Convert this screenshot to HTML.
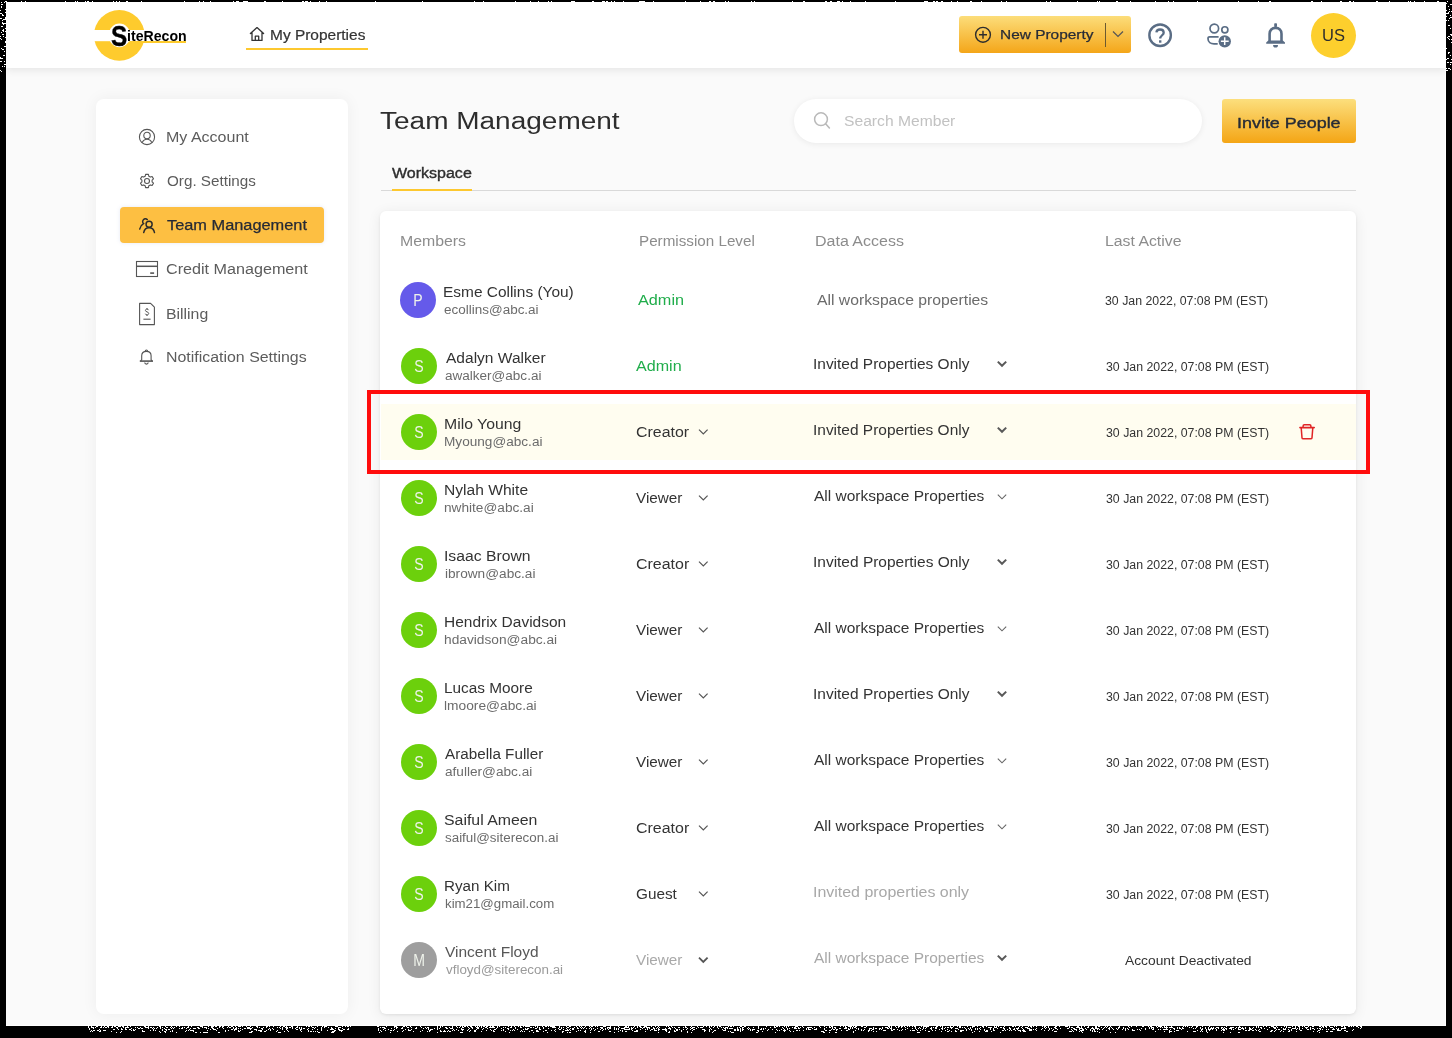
<!DOCTYPE html>
<html><head><meta charset="utf-8"><title>Team Management</title>
<style>
html,body{margin:0;padding:0;}
body{width:1452px;height:1038px;background:#000;position:relative;overflow:hidden;font-family:"Liberation Sans", sans-serif;}
.t{position:absolute;white-space:nowrap;transform-origin:0 0;}
.abs{position:absolute;}
svg{position:absolute;overflow:visible;}
</style></head><body><div style="position:absolute;left:0;top:0;width:1452px;height:1038px;will-change:transform;">
<div class="abs" style="left:6px;top:2px;width:1440px;height:1024px;background:#fff;"></div>
<div class="abs" style="left:6px;top:2px;width:1439px;height:1023px;background:#fafafa;"></div>
<div class="abs" style="left:6px;top:2px;width:1440px;height:66px;background:#fff;box-shadow:0 2px 8px rgba(0,0,0,0.09);"></div>
<svg style="left:0;top:0" width="200" height="70" viewBox="0 0 200 70">
<circle cx="119.3" cy="35.4" r="25.4" fill="#fecb2d"/>
<rect x="90" y="30" width="60" height="11.2" fill="#fff"/>
<ellipse cx="119.5" cy="35.4" rx="10.8" ry="11.9" fill="#fff"/>
<rect x="130" y="41" width="56" height="2" fill="#fecb2d"/>
</svg>
<div class="t" style="left:110.6px;top:21px;font-size:29px;line-height:30px;font-weight:700;color:#000;transform:scaleX(0.84);-webkit-text-stroke:0.4px #000;">S</div>
<svg style="left:249px;top:26px" width="16" height="16" viewBox="0 0 16 16">
<path d="M1.4 7.6 L8 1.6 L14.6 7.6 M3 6.3 V14.4 H13 V6.3 M6.3 14.4 V10.2 H9.7 V14.4" fill="none" stroke="#333" stroke-width="1.3" stroke-linejoin="round" stroke-linecap="round"/>
</svg>
<div class="abs" style="left:246px;top:48px;width:122px;height:2px;background:#fdc82f;"></div>
<div class="abs" style="left:959px;top:16px;width:172px;height:37px;border-radius:3px;background:linear-gradient(#fcdd7a,#f4a619);"></div>
<svg style="left:974px;top:26px" width="18" height="18" viewBox="0 0 18 18">
<circle cx="9" cy="8.8" r="7.4" fill="none" stroke="#2d2d2d" stroke-width="1.4"/>
<path d="M9 4.8 V12.8 M5 8.8 H13" stroke="#2d2d2d" stroke-width="1.4"/>
</svg>
<div class="abs" style="left:1105px;top:23px;width:1px;height:24px;background:#6b5a30;"></div>
<svg style="left:1112px;top:30px" width="12" height="9" viewBox="0 0 12 9">
<path d="M1 1.5 L6 6.5 L11 1.5" fill="none" stroke="#555" stroke-width="1.2"/>
</svg>
<svg style="left:1144px;top:19px" width="32" height="32" viewBox="0 0 32 32">
<circle cx="16.1" cy="16.25" r="10.75" fill="none" stroke="#5a6d85" stroke-width="2.4"/>
<path d="M12.4 13.3 C12.6 11.2 14.1 10.5 16 10.5 C18 10.5 19.7 11.7 19.7 13.7 C19.7 16.1 16.2 16.5 16.2 19.6" fill="none" stroke="#5a6d85" stroke-width="2.3"/>
<rect x="15" y="21.3" width="2.4" height="2.4" fill="#5a6d85"/>
</svg>
<svg style="left:1202px;top:18px" width="34" height="34" viewBox="0 0 34 34">
<circle cx="12.3" cy="10.5" r="4.3" fill="none" stroke="#5a6d85" stroke-width="1.7"/>
<circle cx="22.85" cy="11.8" r="3.05" fill="none" stroke="#5a6d85" stroke-width="1.7"/>
<path d="M16.6 18.85 H7.6 C6.3 18.85 6 19.5 6 20.8 C6 24.2 8.8 25.9 12 25.9 H15.7" fill="none" stroke="#5a6d85" stroke-width="1.7"/>
<circle cx="22.75" cy="23.35" r="6.2" fill="#5a6d85"/>
<path d="M22.7 19.3 V27 M18.9 23.3 H26.7" stroke="#fff" stroke-width="1.5"/>
</svg>
<svg style="left:1260px;top:18px" width="32" height="32" viewBox="0 0 32 32">
<rect x="14.2" y="5.3" width="2.8" height="3.8" rx="0.8" fill="#5a6d85"/>
<path d="M9.6 23.2 V15.8 C9.6 12.1 12 9.9 15.55 9.9 C19.1 9.9 21.5 12.1 21.5 15.8 V23.2" fill="none" stroke="#5a6d85" stroke-width="2.6"/>
<path d="M8.3 22.4 H22.8 L25 24.5 V25.7 H6.2 V24.5 Z" fill="#5a6d85"/>
<path d="M13.1 27 H18 A2.45 2.6 0 0 1 13.1 27 Z" fill="#5a6d85"/>
</svg>
<div class="abs" style="left:1311px;top:12.5px;width:45px;height:45px;border-radius:50%;background:#fdcf2d;"></div>
<div class="abs" style="left:96px;top:99px;width:252px;height:915px;border-radius:8px;background:#fff;box-shadow:0 0 16px rgba(0,0,0,0.055);"></div>
<div class="abs" style="left:120px;top:207px;width:204px;height:36px;border-radius:4px;background:#fdbf42;box-shadow:0 0 4px rgba(120,140,200,0.18);"></div>
<svg style="left:138px;top:128px" width="18" height="18" viewBox="0 0 18 18">
<circle cx="9" cy="9" r="7.6" fill="none" stroke="#555" stroke-width="1.1"/>
<circle cx="9" cy="7.5" r="3.2" fill="none" stroke="#555" stroke-width="1.1"/>
<path d="M4.2 14.6 C5.2 12.2 7 11.2 9 11.2 C11 11.2 12.8 12.2 13.8 14.6" fill="none" stroke="#555" stroke-width="1.1"/>
</svg>
<svg style="left:139px;top:173px" width="16" height="16" viewBox="0 0 16 16">
<path d="M6.6 1.4 H9.4 L9.8 3.2 L11.4 4.1 L13.1 3.5 L14.5 5.9 L13.1 7.1 V8.9 L14.5 10.1 L13.1 12.5 L11.4 11.9 L9.8 12.8 L9.4 14.6 H6.6 L6.2 12.8 L4.6 11.9 L2.9 12.5 L1.5 10.1 L2.9 8.9 V7.1 L1.5 5.9 L2.9 3.5 L4.6 4.1 L6.2 3.2 Z" fill="none" stroke="#555" stroke-width="1.1" stroke-linejoin="round"/>
<circle cx="8" cy="8" r="2.5" fill="none" stroke="#555" stroke-width="1.1"/>
</svg>
<svg style="left:138px;top:216px" width="18" height="18" viewBox="0 0 18 18">
<path d="M9.3 3.6 A2.75 2.75 0 1 0 5.5 7.6 C3.6 8.6 2.2 10.6 1.7 13.1" fill="none" stroke="#2b2b2b" stroke-width="1.45" stroke-linecap="round"/>
<circle cx="11.1" cy="8.2" r="3.05" fill="none" stroke="#2b2b2b" stroke-width="1.45"/>
<path d="M5.7 16.6 C6.3 13.4 8.4 11.7 11.1 11.7 C13.8 11.7 15.9 13.4 16.5 16.6" fill="none" stroke="#2b2b2b" stroke-width="1.45" stroke-linecap="round"/>
</svg>
<svg style="left:135px;top:260px" width="24" height="18" viewBox="0 0 24 18">
<rect x="1.5" y="1.5" width="21" height="15" fill="none" stroke="#555" stroke-width="1.1"/>
<path d="M1.5 6.3 H22.5" stroke="#555" stroke-width="1.5"/>
<path d="M15.2 13.1 H19.1" stroke="#555" stroke-width="1.6"/>
</svg>
<svg style="left:138px;top:302px" width="18" height="24" viewBox="0 0 18 24">
<path d="M1.6 1.4 H12.6 L16.4 5.2 V22.6 H1.6 Z" fill="none" stroke="#555" stroke-width="1.1" stroke-linejoin="round"/>
<path d="M10.6 8.2 C10.4 7.4 9.8 7.1 9 7.1 C8.1 7.1 7.4 7.6 7.4 8.4 C7.4 10.2 10.7 9.5 10.7 11.5 C10.7 12.3 10 12.9 9 12.9 C8.1 12.9 7.5 12.5 7.3 11.7 M9 6 V7.1 M9 12.9 V14" fill="none" stroke="#555" stroke-width="1"/>
<path d="M5.4 17.2 H12.6" stroke="#555" stroke-width="1.1"/>
</svg>
<svg style="left:139px;top:347px" width="16" height="20" viewBox="0 0 16 20">
<path d="M6.2 4.4 C6.2 2.5 8.6 2.5 8.6 4.4" fill="none" stroke="#555" stroke-width="1.1"/>
<path d="M2.7 12.9 V8.8 C2.7 6 4.5 4.4 7.4 4.4 C10.3 4.4 12.1 6 12.1 8.8 V12.9 L13.2 13.8 M2.7 12.9 L1.6 13.8" fill="none" stroke="#555" stroke-width="1.1"/>
<path d="M1.6 14.1 H13.2" stroke="#555" stroke-width="1.6" stroke-linecap="square"/>
<path d="M5.7 15.5 C5.8 17.6 9.1 17.6 9.2 15.5" fill="none" stroke="#555" stroke-width="1.1"/>
</svg>
<div class="abs" style="left:794px;top:99px;width:408px;height:44px;border-radius:22px;background:#fff;box-shadow:0 1px 6px rgba(0,0,0,0.07);"></div>
<svg style="left:810px;top:110px" width="24" height="24" viewBox="0 0 24 24">
<circle cx="11" cy="9.2" r="6.4" fill="none" stroke="#b9b9b9" stroke-width="1.5"/>
<path d="M15.6 13.8 L19.4 18" stroke="#b9b9b9" stroke-width="1.6" stroke-linecap="round"/>
</svg>
<div class="abs" style="left:1222px;top:99px;width:134px;height:44px;border-radius:3px;background:linear-gradient(#fcdf7d,#f4a515);"></div>
<div class="abs" style="left:381px;top:190px;width:975px;height:1px;background:#d9d9d9;"></div>
<div class="abs" style="left:392px;top:189px;width:80px;height:2px;background:#fdc82f;"></div>
<div class="abs" style="left:380px;top:211px;width:976px;height:803px;border-radius:6px;background:#fff;box-shadow:0 1px 3px rgba(0,0,0,0.07),0 2px 14px rgba(0,0,0,0.075);"></div>
<div class="abs" style="left:400px;top:282px;width:36px;height:36px;border-radius:50%;background:#655aea;"></div>
<div class="t" style="left:400px;top:283.0px;width:36px;height:36px;line-height:36px;text-align:center;font-size:16px;color:#eef2ea;transform:scaleX(0.88);transform-origin:18px 0;">P</div>
<div class="abs" style="left:401px;top:348px;width:36px;height:36px;border-radius:50%;background:#6cd00c;"></div>
<div class="t" style="left:401px;top:349.0px;width:36px;height:36px;line-height:36px;text-align:center;font-size:16px;color:#eef2ea;transform:scaleX(0.88);transform-origin:18px 0;">S</div>
<svg style="left:995px;top:359.3px" width="14" height="10" viewBox="0 0 14 10">
<path d="M2.8 2.6 L7 6.8 L11.2 2.6" fill="none" stroke="#595959" stroke-width="2"/>
</svg>
<div class="abs" style="left:381px;top:404px;width:975px;height:56px;background:#fffdf0;"></div>
<div class="abs" style="left:401px;top:414px;width:36px;height:36px;border-radius:50%;background:#6cd00c;"></div>
<div class="t" style="left:401px;top:415.0px;width:36px;height:36px;line-height:36px;text-align:center;font-size:16px;color:#eef2ea;transform:scaleX(0.88);transform-origin:18px 0;">S</div>
<svg style="left:697px;top:428px" width="12" height="8" viewBox="0 0 12 8">
<path d="M2 1.6 L6.3 5.9 L10.6 1.6" fill="none" stroke="#555" stroke-width="1.2"/>
</svg>
<svg style="left:995px;top:425.3px" width="14" height="10" viewBox="0 0 14 10">
<path d="M2.8 2.6 L7 6.8 L11.2 2.6" fill="none" stroke="#595959" stroke-width="2"/>
</svg>
<svg style="left:1297px;top:422px" width="20" height="20" viewBox="0 0 20 20">
<path d="M2.9 5.6 H17.2" stroke="#e02525" stroke-width="1.6" stroke-linecap="round"/>
<path d="M6.1 5.6 V3.9 C6.1 3 6.5 2.8 7.3 2.8 H12.7 C13.5 2.8 13.9 3 13.9 3.9 V5.6" fill="none" stroke="#e02525" stroke-width="1.5"/>
<path d="M4.2 5.8 L5 15.8 C5.1 16.6 5.5 16.85 6.3 16.85 H13.7 C14.5 16.85 14.9 16.6 15 15.8 L15.8 5.8" fill="none" stroke="#e02525" stroke-width="1.5"/>
</svg>
<div class="abs" style="left:401px;top:480px;width:36px;height:36px;border-radius:50%;background:#6cd00c;"></div>
<div class="t" style="left:401px;top:481.0px;width:36px;height:36px;line-height:36px;text-align:center;font-size:16px;color:#eef2ea;transform:scaleX(0.88);transform-origin:18px 0;">S</div>
<svg style="left:697px;top:494px" width="12" height="8" viewBox="0 0 12 8">
<path d="M2 1.6 L6.3 5.9 L10.6 1.6" fill="none" stroke="#555" stroke-width="1.2"/>
</svg>
<svg style="left:995px;top:492.3px" width="14" height="10" viewBox="0 0 14 10">
<path d="M2.8 2.6 L7 6.8 L11.2 2.6" fill="none" stroke="#666" stroke-width="1.1"/>
</svg>
<div class="abs" style="left:401px;top:546px;width:36px;height:36px;border-radius:50%;background:#6cd00c;"></div>
<div class="t" style="left:401px;top:547.0px;width:36px;height:36px;line-height:36px;text-align:center;font-size:16px;color:#eef2ea;transform:scaleX(0.88);transform-origin:18px 0;">S</div>
<svg style="left:697px;top:560px" width="12" height="8" viewBox="0 0 12 8">
<path d="M2 1.6 L6.3 5.9 L10.6 1.6" fill="none" stroke="#555" stroke-width="1.2"/>
</svg>
<svg style="left:995px;top:557.3px" width="14" height="10" viewBox="0 0 14 10">
<path d="M2.8 2.6 L7 6.8 L11.2 2.6" fill="none" stroke="#595959" stroke-width="2"/>
</svg>
<div class="abs" style="left:401px;top:612px;width:36px;height:36px;border-radius:50%;background:#6cd00c;"></div>
<div class="t" style="left:401px;top:613.0px;width:36px;height:36px;line-height:36px;text-align:center;font-size:16px;color:#eef2ea;transform:scaleX(0.88);transform-origin:18px 0;">S</div>
<svg style="left:697px;top:626px" width="12" height="8" viewBox="0 0 12 8">
<path d="M2 1.6 L6.3 5.9 L10.6 1.6" fill="none" stroke="#555" stroke-width="1.2"/>
</svg>
<svg style="left:995px;top:624.3px" width="14" height="10" viewBox="0 0 14 10">
<path d="M2.8 2.6 L7 6.8 L11.2 2.6" fill="none" stroke="#666" stroke-width="1.1"/>
</svg>
<div class="abs" style="left:401px;top:678px;width:36px;height:36px;border-radius:50%;background:#6cd00c;"></div>
<div class="t" style="left:401px;top:679.0px;width:36px;height:36px;line-height:36px;text-align:center;font-size:16px;color:#eef2ea;transform:scaleX(0.88);transform-origin:18px 0;">S</div>
<svg style="left:697px;top:692px" width="12" height="8" viewBox="0 0 12 8">
<path d="M2 1.6 L6.3 5.9 L10.6 1.6" fill="none" stroke="#555" stroke-width="1.2"/>
</svg>
<svg style="left:995px;top:689.3px" width="14" height="10" viewBox="0 0 14 10">
<path d="M2.8 2.6 L7 6.8 L11.2 2.6" fill="none" stroke="#595959" stroke-width="2"/>
</svg>
<div class="abs" style="left:401px;top:744px;width:36px;height:36px;border-radius:50%;background:#6cd00c;"></div>
<div class="t" style="left:401px;top:745.0px;width:36px;height:36px;line-height:36px;text-align:center;font-size:16px;color:#eef2ea;transform:scaleX(0.88);transform-origin:18px 0;">S</div>
<svg style="left:697px;top:758px" width="12" height="8" viewBox="0 0 12 8">
<path d="M2 1.6 L6.3 5.9 L10.6 1.6" fill="none" stroke="#555" stroke-width="1.2"/>
</svg>
<svg style="left:995px;top:756.3px" width="14" height="10" viewBox="0 0 14 10">
<path d="M2.8 2.6 L7 6.8 L11.2 2.6" fill="none" stroke="#666" stroke-width="1.1"/>
</svg>
<div class="abs" style="left:401px;top:810px;width:36px;height:36px;border-radius:50%;background:#6cd00c;"></div>
<div class="t" style="left:401px;top:811.0px;width:36px;height:36px;line-height:36px;text-align:center;font-size:16px;color:#eef2ea;transform:scaleX(0.88);transform-origin:18px 0;">S</div>
<svg style="left:697px;top:824px" width="12" height="8" viewBox="0 0 12 8">
<path d="M2 1.6 L6.3 5.9 L10.6 1.6" fill="none" stroke="#555" stroke-width="1.2"/>
</svg>
<svg style="left:995px;top:822.3px" width="14" height="10" viewBox="0 0 14 10">
<path d="M2.8 2.6 L7 6.8 L11.2 2.6" fill="none" stroke="#666" stroke-width="1.1"/>
</svg>
<div class="abs" style="left:401px;top:876px;width:36px;height:36px;border-radius:50%;background:#6cd00c;"></div>
<div class="t" style="left:401px;top:877.0px;width:36px;height:36px;line-height:36px;text-align:center;font-size:16px;color:#eef2ea;transform:scaleX(0.88);transform-origin:18px 0;">S</div>
<svg style="left:697px;top:890px" width="12" height="8" viewBox="0 0 12 8">
<path d="M2 1.6 L6.3 5.9 L10.6 1.6" fill="none" stroke="#555" stroke-width="1.2"/>
</svg>
<div class="abs" style="left:401px;top:942px;width:36px;height:36px;border-radius:50%;background:#9e9e9e;"></div>
<div class="t" style="left:401px;top:943.0px;width:36px;height:36px;line-height:36px;text-align:center;font-size:16px;color:#eef2ea;transform:scaleX(0.88);transform-origin:18px 0;">M</div>
<svg style="left:697px;top:956px" width="12" height="8" viewBox="0 0 12 8">
<path d="M2 1.6 L6.3 5.9 L10.6 1.6" fill="none" stroke="#555" stroke-width="1.8"/>
</svg>
<svg style="left:995px;top:953.3px" width="14" height="10" viewBox="0 0 14 10">
<path d="M2.8 2.6 L7 6.8 L11.2 2.6" fill="none" stroke="#595959" stroke-width="2"/>
</svg>
<div class="t" style="left:127.48px;top:28.85px;font-size:14px;line-height:14px;color:#000;font-weight:700;transform:scaleX(1.0095);">iteRecon</div>
<div class="t" style="left:269.53px;top:28.05px;font-size:14px;line-height:14px;color:#333;font-weight:400;transform:scaleX(1.1045);-webkit-text-stroke:0.2px #333;">My Properties</div>
<div class="t" style="left:1000.49px;top:27.84px;font-size:13.6px;line-height:13.6px;color:#272b36;font-weight:400;transform:scaleX(1.1343);-webkit-text-stroke:0.25px #272b36;">New Property</div>
<div class="t" style="left:1321.90px;top:27.01px;font-size:17px;line-height:17px;color:#2d2d2d;font-weight:400;transform:scaleX(0.9711);">US</div>
<div class="t" style="left:166.09px;top:130.15px;font-size:14px;line-height:14px;color:#5c5c5c;font-weight:400;transform:scaleX(1.1441);">My Account</div>
<div class="t" style="left:166.60px;top:174.25px;font-size:14px;line-height:14px;color:#5c5c5c;font-weight:400;transform:scaleX(1.0874);">Org. Settings</div>
<div class="t" style="left:167.12px;top:217.95px;font-size:14px;line-height:14px;color:#262a35;font-weight:400;transform:scaleX(1.1676);-webkit-text-stroke:0.25px #262a35;">Team Management</div>
<div class="t" style="left:166.34px;top:262.15px;font-size:14px;line-height:14px;color:#5c5c5c;font-weight:400;transform:scaleX(1.1535);">Credit Management</div>
<div class="t" style="left:166.29px;top:307.25px;font-size:14px;line-height:14px;color:#5c5c5c;font-weight:400;transform:scaleX(1.1294);">Billing</div>
<div class="t" style="left:166.23px;top:350.05px;font-size:14px;line-height:14px;color:#5c5c5c;font-weight:400;transform:scaleX(1.1367);">Notification Settings</div>
<div class="t" style="left:380.42px;top:109.53px;font-size:23px;line-height:23px;color:#2d2d2d;font-weight:400;transform:scaleX(1.2171);">Team Management</div>
<div class="t" style="left:843.82px;top:114.05px;font-size:14px;line-height:14px;color:#c2c2c2;font-weight:400;transform:scaleX(1.1179);">Search Member</div>
<div class="t" style="left:1237.25px;top:115.06px;font-size:15.4px;line-height:15.4px;color:#262b36;font-weight:400;transform:scaleX(1.1641);-webkit-text-stroke:0.4px #262b36;">Invite People</div>
<div class="t" style="left:392.35px;top:166.15px;font-size:14px;line-height:14px;color:#2d2d2d;font-weight:400;transform:scaleX(1.1435);-webkit-text-stroke:0.35px #2d2d2d;">Workspace</div>
<div class="t" style="left:399.52px;top:234.15px;font-size:14px;line-height:14px;color:#8c8c8c;font-weight:400;transform:scaleX(1.1314);">Members</div>
<div class="t" style="left:638.62px;top:234.15px;font-size:14px;line-height:14px;color:#8c8c8c;font-weight:400;transform:scaleX(1.0862);">Permission Level</div>
<div class="t" style="left:814.62px;top:234.15px;font-size:14px;line-height:14px;color:#8c8c8c;font-weight:400;transform:scaleX(1.1427);">Data Access</div>
<div class="t" style="left:1104.84px;top:234.15px;font-size:14px;line-height:14px;color:#8c8c8c;font-weight:400;transform:scaleX(1.1287);">Last Active</div>
<div class="t" style="left:443.43px;top:285.35px;font-size:14px;line-height:14px;color:#333;font-weight:400;transform:scaleX(1.1029);">Esme Collins (You)</div>
<div class="t" style="left:444.33px;top:303.84px;font-size:12px;line-height:12px;color:#6b6b6b;font-weight:400;transform:scaleX(1.1233);">ecollins@abc.ai</div>
<div class="t" style="left:637.64px;top:293.15px;font-size:14px;line-height:14px;color:#20ad4b;font-weight:400;transform:scaleX(1.1606);">Admin</div>
<div class="t" style="left:816.72px;top:293.25px;font-size:14px;line-height:14px;color:#6b6b6b;font-weight:400;transform:scaleX(1.1227);">All workspace properties</div>
<div class="t" style="left:1104.57px;top:294.52px;font-size:12.5px;line-height:12.5px;color:#333;font-weight:400;transform:scaleX(0.9864);">30 Jan 2022, 07:08 PM (EST)</div>
<div class="t" style="left:445.51px;top:351.35px;font-size:14px;line-height:14px;color:#333;font-weight:400;transform:scaleX(1.1094);">Adalyn Walker</div>
<div class="t" style="left:444.81px;top:369.64px;font-size:12px;line-height:12px;color:#6b6b6b;font-weight:400;transform:scaleX(1.1269);">awalker@abc.ai</div>
<div class="t" style="left:636.40px;top:359.15px;font-size:14px;line-height:14px;color:#20ad4b;font-weight:400;transform:scaleX(1.1495);">Admin</div>
<div class="t" style="left:812.68px;top:357.45px;font-size:14px;line-height:14px;color:#333;font-weight:400;transform:scaleX(1.1043);">Invited Properties Only</div>
<div class="t" style="left:1105.57px;top:360.52px;font-size:12.5px;line-height:12.5px;color:#333;font-weight:400;transform:scaleX(0.9864);">30 Jan 2022, 07:08 PM (EST)</div>
<div class="t" style="left:443.80px;top:417.35px;font-size:14px;line-height:14px;color:#333;font-weight:400;transform:scaleX(1.1282);">Milo Young</div>
<div class="t" style="left:444.40px;top:435.64px;font-size:12px;line-height:12px;color:#6b6b6b;font-weight:400;transform:scaleX(1.1334);">Myoung@abc.ai</div>
<div class="t" style="left:635.84px;top:425.15px;font-size:14px;line-height:14px;color:#333;font-weight:400;transform:scaleX(1.1371);">Creator</div>
<div class="t" style="left:812.68px;top:423.45px;font-size:14px;line-height:14px;color:#333;font-weight:400;transform:scaleX(1.1043);">Invited Properties Only</div>
<div class="t" style="left:1105.57px;top:426.52px;font-size:12.5px;line-height:12.5px;color:#333;font-weight:400;transform:scaleX(0.9864);">30 Jan 2022, 07:08 PM (EST)</div>
<div class="t" style="left:444.01px;top:483.35px;font-size:14px;line-height:14px;color:#333;font-weight:400;transform:scaleX(1.1137);">Nylah White</div>
<div class="t" style="left:444.35px;top:501.64px;font-size:12px;line-height:12px;color:#6b6b6b;font-weight:400;transform:scaleX(1.1374);">nwhite@abc.ai</div>
<div class="t" style="left:636.37px;top:491.15px;font-size:14px;line-height:14px;color:#333;font-weight:400;transform:scaleX(1.0922);">Viewer</div>
<div class="t" style="left:814.26px;top:489.45px;font-size:14px;line-height:14px;color:#333;font-weight:400;transform:scaleX(1.1052);">All workspace Properties</div>
<div class="t" style="left:1105.57px;top:492.52px;font-size:12.5px;line-height:12.5px;color:#333;font-weight:400;transform:scaleX(0.9864);">30 Jan 2022, 07:08 PM (EST)</div>
<div class="t" style="left:443.61px;top:549.35px;font-size:14px;line-height:14px;color:#333;font-weight:400;transform:scaleX(1.1244);">Isaac Brown</div>
<div class="t" style="left:444.65px;top:567.64px;font-size:12px;line-height:12px;color:#6b6b6b;font-weight:400;transform:scaleX(1.1371);">ibrown@abc.ai</div>
<div class="t" style="left:635.77px;top:557.15px;font-size:14px;line-height:14px;color:#333;font-weight:400;transform:scaleX(1.1403);">Creator</div>
<div class="t" style="left:812.68px;top:555.45px;font-size:14px;line-height:14px;color:#333;font-weight:400;transform:scaleX(1.1051);">Invited Properties Only</div>
<div class="t" style="left:1105.57px;top:558.52px;font-size:12.5px;line-height:12.5px;color:#333;font-weight:400;transform:scaleX(0.9864);">30 Jan 2022, 07:08 PM (EST)</div>
<div class="t" style="left:444.14px;top:615.35px;font-size:14px;line-height:14px;color:#333;font-weight:400;transform:scaleX(1.1053);">Hendrix Davidson</div>
<div class="t" style="left:444.35px;top:633.64px;font-size:12px;line-height:12px;color:#6b6b6b;font-weight:400;transform:scaleX(1.1436);">hdavidson@abc.ai</div>
<div class="t" style="left:636.37px;top:623.15px;font-size:14px;line-height:14px;color:#333;font-weight:400;transform:scaleX(1.0922);">Viewer</div>
<div class="t" style="left:814.26px;top:621.45px;font-size:14px;line-height:14px;color:#333;font-weight:400;transform:scaleX(1.1052);">All workspace Properties</div>
<div class="t" style="left:1105.57px;top:624.52px;font-size:12.5px;line-height:12.5px;color:#333;font-weight:400;transform:scaleX(0.9864);">30 Jan 2022, 07:08 PM (EST)</div>
<div class="t" style="left:444.26px;top:681.35px;font-size:14px;line-height:14px;color:#333;font-weight:400;transform:scaleX(1.0957);">Lucas Moore</div>
<div class="t" style="left:444.35px;top:699.64px;font-size:12px;line-height:12px;color:#6b6b6b;font-weight:400;transform:scaleX(1.1457);">lmoore@abc.ai</div>
<div class="t" style="left:636.37px;top:689.15px;font-size:14px;line-height:14px;color:#333;font-weight:400;transform:scaleX(1.0922);">Viewer</div>
<div class="t" style="left:812.68px;top:687.45px;font-size:14px;line-height:14px;color:#333;font-weight:400;transform:scaleX(1.1051);">Invited Properties Only</div>
<div class="t" style="left:1105.57px;top:690.52px;font-size:12.5px;line-height:12.5px;color:#333;font-weight:400;transform:scaleX(0.9864);">30 Jan 2022, 07:08 PM (EST)</div>
<div class="t" style="left:445.48px;top:747.35px;font-size:14px;line-height:14px;color:#333;font-weight:400;transform:scaleX(1.0881);">Arabella Fuller</div>
<div class="t" style="left:444.80px;top:765.64px;font-size:12px;line-height:12px;color:#6b6b6b;font-weight:400;transform:scaleX(1.1347);">afuller@abc.ai</div>
<div class="t" style="left:636.37px;top:755.15px;font-size:14px;line-height:14px;color:#333;font-weight:400;transform:scaleX(1.0922);">Viewer</div>
<div class="t" style="left:814.26px;top:753.45px;font-size:14px;line-height:14px;color:#333;font-weight:400;transform:scaleX(1.1052);">All workspace Properties</div>
<div class="t" style="left:1105.57px;top:756.52px;font-size:12.5px;line-height:12.5px;color:#333;font-weight:400;transform:scaleX(0.9864);">30 Jan 2022, 07:08 PM (EST)</div>
<div class="t" style="left:443.96px;top:813.35px;font-size:14px;line-height:14px;color:#333;font-weight:400;transform:scaleX(1.1326);">Saiful Ameen</div>
<div class="t" style="left:444.56px;top:831.64px;font-size:12px;line-height:12px;color:#6b6b6b;font-weight:400;transform:scaleX(1.1161);">saiful@siterecon.ai</div>
<div class="t" style="left:635.77px;top:821.15px;font-size:14px;line-height:14px;color:#333;font-weight:400;transform:scaleX(1.1403);">Creator</div>
<div class="t" style="left:814.26px;top:819.45px;font-size:14px;line-height:14px;color:#333;font-weight:400;transform:scaleX(1.1052);">All workspace Properties</div>
<div class="t" style="left:1105.57px;top:822.52px;font-size:12.5px;line-height:12.5px;color:#333;font-weight:400;transform:scaleX(0.9864);">30 Jan 2022, 07:08 PM (EST)</div>
<div class="t" style="left:444.38px;top:879.35px;font-size:14px;line-height:14px;color:#333;font-weight:400;transform:scaleX(1.0852);">Ryan Kim</div>
<div class="t" style="left:444.72px;top:897.64px;font-size:12px;line-height:12px;color:#6b6b6b;font-weight:400;transform:scaleX(1.1045);">kim21@gmail.com</div>
<div class="t" style="left:635.78px;top:887.15px;font-size:14px;line-height:14px;color:#333;font-weight:400;transform:scaleX(1.0941);">Guest</div>
<div class="t" style="left:812.67px;top:885.45px;font-size:14px;line-height:14px;color:#a8a8a8;font-weight:400;transform:scaleX(1.1393);">Invited properties only</div>
<div class="t" style="left:1105.57px;top:888.52px;font-size:12.5px;line-height:12.5px;color:#333;font-weight:400;transform:scaleX(0.9864);">30 Jan 2022, 07:08 PM (EST)</div>
<div class="t" style="left:445.09px;top:945.35px;font-size:14px;line-height:14px;color:#575757;font-weight:400;transform:scaleX(1.1064);">Vincent Floyd</div>
<div class="t" style="left:445.54px;top:963.64px;font-size:12px;line-height:12px;color:#9a9a9a;font-weight:400;transform:scaleX(1.1162);">vfloyd@siterecon.ai</div>
<div class="t" style="left:636.37px;top:953.15px;font-size:14px;line-height:14px;color:#a9a9a9;font-weight:400;transform:scaleX(1.0922);">Viewer</div>
<div class="t" style="left:814.26px;top:951.45px;font-size:14px;line-height:14px;color:#a8a8a8;font-weight:400;transform:scaleX(1.1052);">All workspace Properties</div>
<div class="t" style="left:1124.72px;top:954.64px;font-size:12px;line-height:12px;color:#333;font-weight:400;transform:scaleX(1.1496);">Account Deactivated</div>
<div class="abs" style="left:367px;top:390px;width:995px;height:76px;border:4px solid #ff0d0d;"></div>
<svg style="left:88px;top:1026px" width="263" height="7" viewBox="0 0 263 7" shape-rendering="crispEdges"><path fill="#fff" d="M0 0h1v1h-1zM3 0h1v1h-1zM8 0h2v1h-2zM13 0h1v1h-1zM16 0h1v1h-1zM19 0h2v1h-2zM24 0h1v1h-1zM26 0h2v1h-2zM30 0h3v1h-3zM34 0h2v1h-2zM39 0h1v1h-1zM42 0h1v1h-1zM56 0h2v1h-2zM60 0h1v1h-1zM71 0h2v1h-2zM77 0h1v1h-1zM83 0h1v1h-1zM88 0h1v1h-1zM91 0h1v1h-1zM100 0h1v1h-1zM103 0h1v1h-1zM112 0h3v1h-3zM120 0h1v1h-1zM123 0h3v1h-3zM127 0h2v1h-2zM131 0h2v1h-2zM134 0h2v1h-2zM140 0h1v1h-1zM143 0h2v1h-2zM147 0h1v1h-1zM150 0h3v1h-3zM154 0h1v1h-1zM158 0h1v1h-1zM162 0h1v1h-1zM168 0h2v1h-2zM178 0h2v1h-2zM181 0h1v1h-1zM185 0h1v1h-1zM192 0h1v1h-1zM195 0h2v1h-2zM198 0h1v1h-1zM203 0h2v1h-2zM209 0h1v1h-1zM218 0h1v1h-1zM220 0h2v1h-2zM223 0h1v1h-1zM229 0h1v1h-1zM234 0h1v1h-1zM236 0h3v1h-3zM247 0h3v1h-3zM254 0h1v1h-1zM257 0h1v1h-1zM259 0h2v1h-2zM262 0h1v1h-1zM0 1h1v1h-1zM3 1h3v1h-3zM7 1h1v1h-1zM12 1h2v1h-2zM15 1h1v1h-1zM17 1h2v1h-2zM20 1h1v1h-1zM23 1h2v1h-2zM28 1h2v1h-2zM35 1h1v1h-1zM37 1h4v1h-4zM47 1h1v1h-1zM49 1h1v1h-1zM52 1h1v1h-1zM57 1h4v1h-4zM62 1h2v1h-2zM65 1h1v1h-1zM69 1h1v1h-1zM72 1h1v1h-1zM74 1h1v1h-1zM78 1h2v1h-2zM82 1h1v1h-1zM84 1h1v1h-1zM86 1h1v1h-1zM94 1h1v1h-1zM96 1h1v1h-1zM99 1h2v1h-2zM109 1h2v1h-2zM114 1h1v1h-1zM116 1h3v1h-3zM123 1h2v1h-2zM131 1h1v1h-1zM134 1h1v1h-1zM139 1h1v1h-1zM141 1h2v1h-2zM145 1h1v1h-1zM148 1h1v1h-1zM159 1h3v1h-3zM164 1h1v1h-1zM169 1h1v1h-1zM171 1h1v1h-1zM175 1h1v1h-1zM178 1h1v1h-1zM189 1h1v1h-1zM191 1h1v1h-1zM194 1h1v1h-1zM197 1h3v1h-3zM201 1h2v1h-2zM204 1h1v1h-1zM208 1h2v1h-2zM211 1h1v1h-1zM213 1h1v1h-1zM224 1h2v1h-2zM227 1h1v1h-1zM233 1h1v1h-1zM236 1h1v1h-1zM240 1h1v1h-1zM243 1h1v1h-1zM250 1h3v1h-3zM1 2h1v1h-1zM5 2h1v1h-1zM29 2h1v1h-1zM33 2h1v1h-1zM37 2h1v1h-1zM43 2h1v1h-1zM50 2h2v1h-2zM53 2h2v1h-2zM60 2h1v1h-1zM64 2h1v1h-1zM66 2h1v1h-1zM68 2h1v1h-1zM72 2h1v1h-1zM76 2h1v1h-1zM83 2h1v1h-1zM85 2h1v1h-1zM91 2h1v1h-1zM93 2h2v1h-2zM98 2h1v1h-1zM102 2h1v1h-1zM105 2h3v1h-3zM110 2h2v1h-2zM118 2h1v1h-1zM120 2h1v1h-1zM124 2h2v1h-2zM129 2h1v1h-1zM135 2h1v1h-1zM145 2h1v1h-1zM147 2h2v1h-2zM150 2h1v1h-1zM152 2h1v1h-1zM156 2h2v1h-2zM159 2h5v1h-5zM173 2h2v1h-2zM181 2h1v1h-1zM184 2h1v1h-1zM192 2h1v1h-1zM194 2h1v1h-1zM198 2h2v1h-2zM204 2h1v1h-1zM207 2h1v1h-1zM211 2h1v1h-1zM213 2h1v1h-1zM215 2h2v1h-2zM220 2h1v1h-1zM226 2h1v1h-1zM233 2h1v1h-1zM243 2h2v1h-2zM247 2h1v1h-1zM250 2h1v1h-1zM254 2h1v1h-1zM260 2h1v1h-1zM1 3h1v1h-1zM11 3h1v1h-1zM25 3h2v1h-2zM30 3h1v1h-1zM33 3h2v1h-2zM37 3h2v1h-2zM41 3h2v1h-2zM45 3h1v1h-1zM47 3h1v1h-1zM65 3h1v1h-1zM74 3h1v1h-1zM77 3h2v1h-2zM80 3h2v1h-2zM101 3h1v1h-1zM122 3h1v1h-1zM125 3h3v1h-3zM143 3h2v1h-2zM146 3h3v1h-3zM154 3h1v1h-1zM162 3h1v1h-1zM166 3h3v1h-3zM174 3h1v1h-1zM180 3h1v1h-1zM182 3h1v1h-1zM185 3h1v1h-1zM194 3h1v1h-1zM198 3h1v1h-1zM208 3h2v1h-2zM212 3h2v1h-2zM219 3h1v1h-1zM224 3h1v1h-1zM229 3h1v1h-1zM233 3h1v1h-1zM242 3h4v1h-4zM250 3h2v1h-2zM255 3h2v1h-2zM259 3h2v1h-2zM3 4h1v1h-1zM5 4h2v1h-2zM9 4h2v1h-2zM12 4h1v1h-1zM15 4h3v1h-3zM43 4h1v1h-1zM45 4h2v1h-2zM54 4h1v1h-1zM62 4h1v1h-1zM65 4h1v1h-1zM67 4h1v1h-1zM74 4h1v1h-1zM78 4h1v1h-1zM84 4h1v1h-1zM98 4h1v1h-1zM100 4h1v1h-1zM102 4h4v1h-4zM119 4h1v1h-1zM128 4h1v1h-1zM137 4h1v1h-1zM140 4h1v1h-1zM146 4h1v1h-1zM150 4h1v1h-1zM152 4h1v1h-1zM168 4h1v1h-1zM170 4h4v1h-4zM178 4h1v1h-1zM182 4h1v1h-1zM189 4h1v1h-1zM199 4h1v1h-1zM212 4h1v1h-1zM220 4h1v1h-1zM233 4h1v1h-1zM239 4h1v1h-1zM246 4h2v1h-2zM251 4h4v1h-4zM2 5h1v1h-1zM4 5h1v1h-1zM11 5h2v1h-2zM23 5h1v1h-1zM33 5h1v1h-1zM54 5h3v1h-3zM71 5h1v1h-1zM76 5h2v1h-2zM82 5h1v1h-1zM84 5h1v1h-1zM97 5h1v1h-1zM105 5h1v1h-1zM137 5h1v1h-1zM150 5h2v1h-2zM163 5h2v1h-2zM172 5h2v1h-2zM176 5h2v1h-2zM188 5h1v1h-1zM196 5h1v1h-1zM200 5h1v1h-1zM213 5h1v1h-1zM220 5h1v1h-1zM222 5h2v1h-2zM225 5h1v1h-1zM227 5h1v1h-1zM229 5h1v1h-1zM244 5h3v1h-3zM253 5h1v1h-1zM28 6h1v1h-1zM32 6h1v1h-1zM72 6h1v1h-1zM77 6h1v1h-1zM88 6h1v1h-1zM107 6h2v1h-2zM112 6h1v1h-1zM115 6h5v1h-5zM130 6h2v1h-2zM161 6h3v1h-3zM190 6h3v1h-3zM230 6h2v1h-2zM243 6h3v1h-3z"/></svg>
<svg style="left:375px;top:1026px" width="987" height="7" viewBox="0 0 987 7" shape-rendering="crispEdges"><path fill="#fff" d="M2 0h2v1h-2zM11 0h1v1h-1zM19 0h3v1h-3zM28 0h2v1h-2zM31 0h1v1h-1zM35 0h1v1h-1zM45 0h1v1h-1zM62 0h1v1h-1zM65 0h1v1h-1zM67 0h1v1h-1zM77 0h1v1h-1zM81 0h1v1h-1zM85 0h1v1h-1zM87 0h1v1h-1zM89 0h2v1h-2zM92 0h1v1h-1zM95 0h2v1h-2zM100 0h1v1h-1zM102 0h1v1h-1zM104 0h1v1h-1zM106 0h1v1h-1zM108 0h2v1h-2zM111 0h2v1h-2zM115 0h1v1h-1zM117 0h2v1h-2zM122 0h1v1h-1zM124 0h1v1h-1zM133 0h1v1h-1zM136 0h1v1h-1zM139 0h1v1h-1zM143 0h1v1h-1zM145 0h1v1h-1zM148 0h1v1h-1zM150 0h5v1h-5zM160 0h1v1h-1zM162 0h1v1h-1zM167 0h1v1h-1zM170 0h2v1h-2zM173 0h1v1h-1zM175 0h5v1h-5zM184 0h1v1h-1zM191 0h1v1h-1zM194 0h2v1h-2zM201 0h1v1h-1zM204 0h1v1h-1zM206 0h1v1h-1zM210 0h1v1h-1zM214 0h1v1h-1zM216 0h2v1h-2zM220 0h1v1h-1zM222 0h1v1h-1zM228 0h3v1h-3zM235 0h1v1h-1zM243 0h1v1h-1zM250 0h2v1h-2zM253 0h1v1h-1zM259 0h1v1h-1zM262 0h1v1h-1zM264 0h2v1h-2zM269 0h3v1h-3zM276 0h1v1h-1zM280 0h1v1h-1zM283 0h1v1h-1zM291 0h1v1h-1zM293 0h1v1h-1zM296 0h1v1h-1zM310 0h1v1h-1zM316 0h1v1h-1zM322 0h1v1h-1zM328 0h1v1h-1zM331 0h1v1h-1zM334 0h1v1h-1zM336 0h1v1h-1zM339 0h1v1h-1zM342 0h1v1h-1zM344 0h2v1h-2zM353 0h1v1h-1zM355 0h2v1h-2zM358 0h1v1h-1zM365 0h2v1h-2zM369 0h2v1h-2zM383 0h1v1h-1zM391 0h1v1h-1zM399 0h1v1h-1zM401 0h2v1h-2zM404 0h1v1h-1zM409 0h1v1h-1zM411 0h1v1h-1zM413 0h1v1h-1zM420 0h3v1h-3zM427 0h1v1h-1zM444 0h1v1h-1zM449 0h1v1h-1zM454 0h1v1h-1zM456 0h2v1h-2zM465 0h1v1h-1zM468 0h1v1h-1zM470 0h1v1h-1zM473 0h4v1h-4zM478 0h1v1h-1zM480 0h2v1h-2zM486 0h2v1h-2zM491 0h1v1h-1zM513 0h2v1h-2zM516 0h1v1h-1zM520 0h1v1h-1zM523 0h2v1h-2zM526 0h2v1h-2zM529 0h1v1h-1zM532 0h1v1h-1zM534 0h1v1h-1zM537 0h1v1h-1zM539 0h2v1h-2zM546 0h1v1h-1zM548 0h6v1h-6zM561 0h2v1h-2zM565 0h1v1h-1zM567 0h1v1h-1zM575 0h1v1h-1zM578 0h1v1h-1zM582 0h1v1h-1zM584 0h2v1h-2zM592 0h1v1h-1zM597 0h3v1h-3zM602 0h1v1h-1zM607 0h2v1h-2zM611 0h1v1h-1zM619 0h1v1h-1zM621 0h1v1h-1zM623 0h1v1h-1zM629 0h1v1h-1zM637 0h2v1h-2zM640 0h1v1h-1zM644 0h1v1h-1zM647 0h1v1h-1zM653 0h1v1h-1zM655 0h2v1h-2zM658 0h1v1h-1zM661 0h1v1h-1zM667 0h1v1h-1zM669 0h2v1h-2zM673 0h1v1h-1zM680 0h2v1h-2zM684 0h1v1h-1zM690 0h3v1h-3zM694 0h1v1h-1zM702 0h2v1h-2zM706 0h1v1h-1zM709 0h1v1h-1zM713 0h1v1h-1zM720 0h2v1h-2zM723 0h2v1h-2zM730 0h1v1h-1zM732 0h1v1h-1zM735 0h1v1h-1zM744 0h1v1h-1zM753 0h1v1h-1zM756 0h1v1h-1zM761 0h1v1h-1zM767 0h2v1h-2zM773 0h1v1h-1zM775 0h2v1h-2zM781 0h1v1h-1zM783 0h4v1h-4zM789 0h1v1h-1zM791 0h1v1h-1zM796 0h1v1h-1zM808 0h1v1h-1zM810 0h1v1h-1zM812 0h1v1h-1zM817 0h1v1h-1zM821 0h2v1h-2zM827 0h1v1h-1zM834 0h1v1h-1zM851 0h1v1h-1zM864 0h1v1h-1zM881 0h1v1h-1zM883 0h1v1h-1zM888 0h1v1h-1zM891 0h1v1h-1zM896 0h3v1h-3zM901 0h1v1h-1zM909 0h1v1h-1zM911 0h1v1h-1zM917 0h1v1h-1zM920 0h1v1h-1zM923 0h2v1h-2zM927 0h1v1h-1zM929 0h1v1h-1zM933 0h1v1h-1zM937 0h2v1h-2zM944 0h2v1h-2zM947 0h2v1h-2zM950 0h2v1h-2zM954 0h1v1h-1zM959 0h1v1h-1zM961 0h1v1h-1zM966 0h2v1h-2zM969 0h1v1h-1zM973 0h2v1h-2zM976 0h1v1h-1zM978 0h1v1h-1zM981 0h2v1h-2zM985 0h2v1h-2zM5 1h1v1h-1zM7 1h3v1h-3zM19 1h1v1h-1zM21 1h2v1h-2zM27 1h1v1h-1zM32 1h2v1h-2zM36 1h1v1h-1zM41 1h1v1h-1zM46 1h1v1h-1zM50 1h1v1h-1zM52 1h2v1h-2zM62 1h1v1h-1zM65 1h1v1h-1zM70 1h2v1h-2zM74 1h1v1h-1zM77 1h1v1h-1zM82 1h1v1h-1zM84 1h1v1h-1zM87 1h2v1h-2zM93 1h1v1h-1zM96 1h2v1h-2zM101 1h3v1h-3zM106 1h1v1h-1zM110 1h2v1h-2zM114 1h6v1h-6zM122 1h1v1h-1zM128 1h1v1h-1zM130 1h1v1h-1zM135 1h2v1h-2zM140 1h1v1h-1zM145 1h2v1h-2zM155 1h2v1h-2zM158 1h1v1h-1zM162 1h1v1h-1zM164 1h1v1h-1zM168 1h1v1h-1zM177 1h4v1h-4zM184 1h1v1h-1zM186 1h1v1h-1zM188 1h1v1h-1zM192 1h2v1h-2zM199 1h1v1h-1zM202 1h1v1h-1zM205 1h1v1h-1zM207 1h1v1h-1zM209 1h1v1h-1zM215 1h1v1h-1zM225 1h3v1h-3zM232 1h4v1h-4zM239 1h1v1h-1zM244 1h1v1h-1zM249 1h5v1h-5zM256 1h1v1h-1zM258 1h1v1h-1zM262 1h1v1h-1zM265 1h2v1h-2zM268 1h2v1h-2zM271 1h4v1h-4zM278 1h1v1h-1zM282 1h1v1h-1zM284 1h1v1h-1zM294 1h1v1h-1zM297 1h1v1h-1zM299 1h1v1h-1zM303 1h2v1h-2zM308 1h1v1h-1zM310 1h2v1h-2zM315 1h1v1h-1zM317 1h3v1h-3zM323 1h1v1h-1zM325 1h3v1h-3zM334 1h1v1h-1zM338 1h1v1h-1zM342 1h1v1h-1zM346 1h1v1h-1zM348 1h1v1h-1zM350 1h3v1h-3zM362 1h1v1h-1zM364 1h1v1h-1zM367 1h2v1h-2zM373 1h1v1h-1zM378 1h1v1h-1zM383 1h1v1h-1zM395 1h1v1h-1zM399 1h2v1h-2zM407 1h1v1h-1zM411 1h1v1h-1zM417 1h1v1h-1zM419 1h2v1h-2zM423 1h1v1h-1zM425 1h1v1h-1zM428 1h1v1h-1zM432 1h5v1h-5zM439 1h1v1h-1zM445 1h1v1h-1zM451 1h1v1h-1zM454 1h2v1h-2zM457 1h1v1h-1zM459 1h2v1h-2zM470 1h2v1h-2zM475 1h1v1h-1zM477 1h1v1h-1zM479 1h2v1h-2zM489 1h2v1h-2zM498 1h1v1h-1zM507 1h1v1h-1zM510 1h3v1h-3zM514 1h1v1h-1zM516 1h1v1h-1zM521 1h1v1h-1zM523 1h1v1h-1zM526 1h1v1h-1zM530 1h1v1h-1zM540 1h1v1h-1zM544 1h1v1h-1zM548 1h1v1h-1zM551 1h1v1h-1zM556 1h1v1h-1zM558 1h1v1h-1zM560 1h2v1h-2zM567 1h1v1h-1zM570 1h1v1h-1zM572 1h2v1h-2zM575 1h3v1h-3zM584 1h2v1h-2zM587 1h1v1h-1zM589 1h1v1h-1zM595 1h1v1h-1zM597 1h1v1h-1zM605 1h1v1h-1zM608 1h1v1h-1zM613 1h4v1h-4zM619 1h3v1h-3zM625 1h2v1h-2zM628 1h1v1h-1zM634 1h1v1h-1zM643 1h1v1h-1zM646 1h1v1h-1zM650 1h3v1h-3zM656 1h1v1h-1zM669 1h1v1h-1zM671 1h1v1h-1zM673 1h1v1h-1zM679 1h2v1h-2zM694 1h1v1h-1zM696 1h2v1h-2zM701 1h4v1h-4zM706 1h1v1h-1zM712 1h2v1h-2zM717 1h1v1h-1zM720 1h2v1h-2zM726 1h1v1h-1zM729 1h1v1h-1zM731 1h1v1h-1zM734 1h1v1h-1zM736 1h1v1h-1zM743 1h2v1h-2zM748 1h1v1h-1zM754 1h1v1h-1zM774 1h1v1h-1zM776 1h3v1h-3zM782 1h1v1h-1zM785 1h1v1h-1zM787 1h1v1h-1zM789 1h4v1h-4zM794 1h4v1h-4zM802 1h1v1h-1zM804 1h1v1h-1zM807 1h1v1h-1zM814 1h1v1h-1zM816 1h1v1h-1zM821 1h1v1h-1zM825 1h1v1h-1zM830 1h1v1h-1zM833 1h1v1h-1zM836 1h1v1h-1zM838 1h1v1h-1zM841 1h3v1h-3zM846 1h2v1h-2zM849 1h1v1h-1zM855 1h4v1h-4zM861 1h1v1h-1zM863 1h3v1h-3zM867 1h1v1h-1zM870 1h1v1h-1zM874 1h1v1h-1zM878 1h1v1h-1zM881 1h1v1h-1zM883 1h1v1h-1zM885 1h2v1h-2zM894 1h1v1h-1zM898 1h3v1h-3zM902 1h1v1h-1zM906 1h1v1h-1zM911 1h1v1h-1zM913 1h3v1h-3zM920 1h1v1h-1zM924 1h1v1h-1zM930 1h3v1h-3zM935 1h1v1h-1zM946 1h1v1h-1zM948 1h1v1h-1zM951 1h1v1h-1zM955 1h3v1h-3zM969 1h2v1h-2zM983 1h1v1h-1zM986 1h1v1h-1zM3 2h1v1h-1zM9 2h2v1h-2zM16 2h1v1h-1zM21 2h1v1h-1zM26 2h2v1h-2zM40 2h2v1h-2zM48 2h1v1h-1zM51 2h1v1h-1zM53 2h1v1h-1zM59 2h1v1h-1zM62 2h1v1h-1zM64 2h1v1h-1zM71 2h2v1h-2zM75 2h3v1h-3zM86 2h1v1h-1zM94 2h1v1h-1zM97 2h1v1h-1zM102 2h2v1h-2zM108 2h1v1h-1zM112 2h1v1h-1zM121 2h1v1h-1zM126 2h1v1h-1zM132 2h2v1h-2zM140 2h1v1h-1zM150 2h1v1h-1zM152 2h2v1h-2zM160 2h2v1h-2zM164 2h1v1h-1zM168 2h1v1h-1zM173 2h1v1h-1zM183 2h1v1h-1zM186 2h1v1h-1zM191 2h1v1h-1zM195 2h1v1h-1zM197 2h2v1h-2zM202 2h2v1h-2zM206 2h1v1h-1zM208 2h1v1h-1zM211 2h1v1h-1zM214 2h1v1h-1zM216 2h1v1h-1zM218 2h1v1h-1zM222 2h1v1h-1zM226 2h2v1h-2zM230 2h1v1h-1zM232 2h1v1h-1zM234 2h2v1h-2zM239 2h1v1h-1zM241 2h1v1h-1zM243 2h1v1h-1zM246 2h4v1h-4zM254 2h1v1h-1zM256 2h2v1h-2zM260 2h1v1h-1zM267 2h1v1h-1zM272 2h1v1h-1zM274 2h1v1h-1zM278 2h2v1h-2zM281 2h1v1h-1zM283 2h1v1h-1zM290 2h1v1h-1zM293 2h3v1h-3zM300 2h1v1h-1zM312 2h1v1h-1zM316 2h2v1h-2zM321 2h1v1h-1zM335 2h1v1h-1zM343 2h1v1h-1zM349 2h2v1h-2zM352 2h1v1h-1zM354 2h4v1h-4zM362 2h1v1h-1zM365 2h1v1h-1zM367 2h1v1h-1zM372 2h1v1h-1zM374 2h1v1h-1zM383 2h1v1h-1zM386 2h1v1h-1zM388 2h1v1h-1zM390 2h1v1h-1zM408 2h1v1h-1zM412 2h1v1h-1zM414 2h1v1h-1zM419 2h3v1h-3zM423 2h2v1h-2zM431 2h1v1h-1zM433 2h1v1h-1zM437 2h1v1h-1zM441 2h1v1h-1zM449 2h1v1h-1zM457 2h1v1h-1zM460 2h1v1h-1zM464 2h2v1h-2zM469 2h3v1h-3zM473 2h1v1h-1zM475 2h1v1h-1zM477 2h1v1h-1zM481 2h1v1h-1zM483 2h1v1h-1zM494 2h3v1h-3zM498 2h1v1h-1zM500 2h2v1h-2zM504 2h2v1h-2zM507 2h1v1h-1zM512 2h2v1h-2zM515 2h2v1h-2zM532 2h1v1h-1zM537 2h1v1h-1zM540 2h1v1h-1zM543 2h1v1h-1zM545 2h1v1h-1zM548 2h1v1h-1zM550 2h1v1h-1zM555 2h2v1h-2zM560 2h2v1h-2zM566 2h2v1h-2zM569 2h1v1h-1zM576 2h1v1h-1zM580 2h3v1h-3zM590 2h1v1h-1zM593 2h1v1h-1zM595 2h1v1h-1zM600 2h1v1h-1zM602 2h1v1h-1zM604 2h1v1h-1zM615 2h1v1h-1zM618 2h1v1h-1zM622 2h1v1h-1zM628 2h2v1h-2zM634 2h2v1h-2zM639 2h1v1h-1zM641 2h3v1h-3zM647 2h1v1h-1zM652 2h3v1h-3zM661 2h1v1h-1zM667 2h1v1h-1zM670 2h1v1h-1zM674 2h1v1h-1zM676 2h1v1h-1zM680 2h2v1h-2zM685 2h1v1h-1zM692 2h2v1h-2zM698 2h2v1h-2zM704 2h4v1h-4zM710 2h1v1h-1zM716 2h3v1h-3zM720 2h4v1h-4zM728 2h1v1h-1zM733 2h2v1h-2zM737 2h1v1h-1zM741 2h1v1h-1zM743 2h1v1h-1zM748 2h1v1h-1zM750 2h1v1h-1zM752 2h1v1h-1zM766 2h1v1h-1zM770 2h1v1h-1zM774 2h1v1h-1zM776 2h1v1h-1zM778 2h1v1h-1zM791 2h1v1h-1zM798 2h2v1h-2zM802 2h1v1h-1zM804 2h2v1h-2zM807 2h2v1h-2zM818 2h1v1h-1zM820 2h1v1h-1zM825 2h1v1h-1zM827 2h1v1h-1zM830 2h1v1h-1zM833 2h1v1h-1zM835 2h4v1h-4zM840 2h1v1h-1zM843 2h1v1h-1zM846 2h1v1h-1zM848 2h1v1h-1zM850 2h2v1h-2zM854 2h3v1h-3zM860 2h1v1h-1zM863 2h1v1h-1zM866 2h3v1h-3zM870 2h1v1h-1zM874 2h2v1h-2zM877 2h1v1h-1zM886 2h1v1h-1zM889 2h1v1h-1zM899 2h2v1h-2zM908 2h1v1h-1zM910 2h1v1h-1zM917 2h4v1h-4zM922 2h1v1h-1zM924 2h1v1h-1zM927 2h1v1h-1zM931 2h1v1h-1zM935 2h1v1h-1zM937 2h2v1h-2zM942 2h1v1h-1zM944 2h2v1h-2zM958 2h1v1h-1zM961 2h1v1h-1zM963 2h1v1h-1zM966 2h5v1h-5zM985 2h1v1h-1zM3 3h1v1h-1zM8 3h1v1h-1zM13 3h1v1h-1zM19 3h1v1h-1zM30 3h1v1h-1zM33 3h1v1h-1zM36 3h1v1h-1zM53 3h1v1h-1zM55 3h3v1h-3zM62 3h1v1h-1zM78 3h1v1h-1zM81 3h1v1h-1zM86 3h3v1h-3zM93 3h1v1h-1zM101 3h1v1h-1zM107 3h1v1h-1zM115 3h1v1h-1zM119 3h2v1h-2zM128 3h1v1h-1zM133 3h1v1h-1zM138 3h1v1h-1zM142 3h1v1h-1zM148 3h1v1h-1zM150 3h3v1h-3zM164 3h2v1h-2zM180 3h1v1h-1zM184 3h2v1h-2zM188 3h1v1h-1zM192 3h1v1h-1zM194 3h1v1h-1zM197 3h2v1h-2zM216 3h1v1h-1zM220 3h1v1h-1zM225 3h1v1h-1zM228 3h1v1h-1zM230 3h1v1h-1zM233 3h1v1h-1zM239 3h1v1h-1zM241 3h1v1h-1zM243 3h1v1h-1zM249 3h6v1h-6zM256 3h1v1h-1zM265 3h1v1h-1zM270 3h1v1h-1zM272 3h1v1h-1zM276 3h2v1h-2zM279 3h1v1h-1zM283 3h2v1h-2zM287 3h5v1h-5zM295 3h1v1h-1zM301 3h2v1h-2zM304 3h1v1h-1zM308 3h1v1h-1zM311 3h1v1h-1zM315 3h1v1h-1zM318 3h2v1h-2zM327 3h3v1h-3zM334 3h1v1h-1zM336 3h1v1h-1zM347 3h1v1h-1zM350 3h1v1h-1zM359 3h2v1h-2zM362 3h2v1h-2zM365 3h1v1h-1zM367 3h2v1h-2zM373 3h1v1h-1zM375 3h1v1h-1zM377 3h3v1h-3zM385 3h2v1h-2zM388 3h1v1h-1zM393 3h1v1h-1zM397 3h1v1h-1zM401 3h1v1h-1zM406 3h1v1h-1zM409 3h1v1h-1zM412 3h1v1h-1zM431 3h1v1h-1zM433 3h3v1h-3zM439 3h3v1h-3zM449 3h1v1h-1zM456 3h1v1h-1zM458 3h2v1h-2zM461 3h2v1h-2zM473 3h2v1h-2zM483 3h1v1h-1zM486 3h1v1h-1zM489 3h1v1h-1zM494 3h1v1h-1zM497 3h2v1h-2zM504 3h1v1h-1zM506 3h1v1h-1zM516 3h1v1h-1zM518 3h2v1h-2zM522 3h1v1h-1zM527 3h1v1h-1zM530 3h1v1h-1zM541 3h1v1h-1zM547 3h1v1h-1zM556 3h1v1h-1zM564 3h1v1h-1zM567 3h1v1h-1zM572 3h1v1h-1zM583 3h1v1h-1zM591 3h1v1h-1zM594 3h1v1h-1zM596 3h1v1h-1zM600 3h1v1h-1zM602 3h1v1h-1zM605 3h1v1h-1zM609 3h1v1h-1zM615 3h1v1h-1zM618 3h1v1h-1zM629 3h1v1h-1zM632 3h1v1h-1zM635 3h1v1h-1zM638 3h2v1h-2zM642 3h1v1h-1zM648 3h1v1h-1zM654 3h3v1h-3zM658 3h1v1h-1zM660 3h1v1h-1zM666 3h1v1h-1zM674 3h1v1h-1zM678 3h1v1h-1zM682 3h1v1h-1zM696 3h1v1h-1zM699 3h3v1h-3zM704 3h1v1h-1zM707 3h2v1h-2zM711 3h1v1h-1zM715 3h1v1h-1zM718 3h2v1h-2zM722 3h1v1h-1zM724 3h1v1h-1zM727 3h1v1h-1zM734 3h1v1h-1zM738 3h1v1h-1zM742 3h1v1h-1zM747 3h1v1h-1zM750 3h1v1h-1zM753 3h1v1h-1zM757 3h1v1h-1zM762 3h1v1h-1zM764 3h1v1h-1zM770 3h1v1h-1zM777 3h2v1h-2zM783 3h1v1h-1zM785 3h1v1h-1zM788 3h5v1h-5zM795 3h1v1h-1zM799 3h1v1h-1zM806 3h1v1h-1zM826 3h2v1h-2zM831 3h1v1h-1zM833 3h3v1h-3zM837 3h1v1h-1zM841 3h1v1h-1zM847 3h3v1h-3zM851 3h1v1h-1zM856 3h1v1h-1zM858 3h1v1h-1zM863 3h3v1h-3zM868 3h1v1h-1zM874 3h3v1h-3zM880 3h1v1h-1zM884 3h1v1h-1zM892 3h1v1h-1zM901 3h1v1h-1zM903 3h2v1h-2zM908 3h3v1h-3zM913 3h1v1h-1zM916 3h1v1h-1zM921 3h1v1h-1zM924 3h1v1h-1zM932 3h2v1h-2zM935 3h1v1h-1zM939 3h1v1h-1zM945 3h1v1h-1zM947 3h1v1h-1zM951 3h1v1h-1zM953 3h1v1h-1zM957 3h3v1h-3zM962 3h2v1h-2zM966 3h1v1h-1zM978 3h1v1h-1zM3 4h1v1h-1zM5 4h1v1h-1zM10 4h1v1h-1zM15 4h2v1h-2zM18 4h1v1h-1zM28 4h1v1h-1zM33 4h3v1h-3zM47 4h1v1h-1zM54 4h2v1h-2zM65 4h1v1h-1zM69 4h1v1h-1zM73 4h1v1h-1zM77 4h1v1h-1zM79 4h1v1h-1zM83 4h1v1h-1zM87 4h1v1h-1zM92 4h1v1h-1zM95 4h1v1h-1zM99 4h2v1h-2zM111 4h1v1h-1zM116 4h1v1h-1zM118 4h1v1h-1zM126 4h1v1h-1zM128 4h1v1h-1zM135 4h1v1h-1zM137 4h1v1h-1zM139 4h1v1h-1zM146 4h1v1h-1zM156 4h2v1h-2zM161 4h2v1h-2zM170 4h2v1h-2zM176 4h1v1h-1zM179 4h1v1h-1zM190 4h4v1h-4zM195 4h1v1h-1zM203 4h1v1h-1zM205 4h1v1h-1zM210 4h1v1h-1zM215 4h1v1h-1zM219 4h1v1h-1zM227 4h1v1h-1zM245 4h1v1h-1zM247 4h1v1h-1zM257 4h1v1h-1zM261 4h2v1h-2zM275 4h1v1h-1zM279 4h3v1h-3zM283 4h1v1h-1zM290 4h2v1h-2zM299 4h1v1h-1zM301 4h2v1h-2zM306 4h1v1h-1zM317 4h1v1h-1zM329 4h2v1h-2zM334 4h1v1h-1zM339 4h2v1h-2zM348 4h3v1h-3zM359 4h2v1h-2zM362 4h2v1h-2zM365 4h1v1h-1zM367 4h1v1h-1zM375 4h1v1h-1zM377 4h1v1h-1zM382 4h2v1h-2zM392 4h1v1h-1zM402 4h1v1h-1zM404 4h1v1h-1zM408 4h3v1h-3zM414 4h1v1h-1zM421 4h2v1h-2zM424 4h1v1h-1zM428 4h1v1h-1zM450 4h2v1h-2zM454 4h2v1h-2zM461 4h1v1h-1zM466 4h1v1h-1zM471 4h2v1h-2zM480 4h1v1h-1zM486 4h1v1h-1zM488 4h1v1h-1zM493 4h2v1h-2zM496 4h1v1h-1zM508 4h3v1h-3zM516 4h2v1h-2zM524 4h1v1h-1zM526 4h1v1h-1zM535 4h1v1h-1zM537 4h3v1h-3zM542 4h1v1h-1zM545 4h1v1h-1zM550 4h1v1h-1zM557 4h1v1h-1zM560 4h1v1h-1zM570 4h1v1h-1zM574 4h1v1h-1zM580 4h1v1h-1zM585 4h4v1h-4zM591 4h1v1h-1zM596 4h1v1h-1zM609 4h1v1h-1zM611 4h2v1h-2zM618 4h2v1h-2zM627 4h2v1h-2zM630 4h1v1h-1zM634 4h1v1h-1zM636 4h1v1h-1zM640 4h1v1h-1zM643 4h3v1h-3zM647 4h3v1h-3zM654 4h3v1h-3zM661 4h1v1h-1zM669 4h1v1h-1zM673 4h1v1h-1zM677 4h1v1h-1zM697 4h1v1h-1zM701 4h1v1h-1zM705 4h4v1h-4zM715 4h1v1h-1zM717 4h1v1h-1zM719 4h1v1h-1zM731 4h1v1h-1zM750 4h1v1h-1zM757 4h3v1h-3zM765 4h1v1h-1zM794 4h1v1h-1zM801 4h3v1h-3zM822 4h1v1h-1zM826 4h1v1h-1zM831 4h1v1h-1zM834 4h1v1h-1zM841 4h1v1h-1zM846 4h1v1h-1zM848 4h2v1h-2zM870 4h2v1h-2zM873 4h2v1h-2zM877 4h2v1h-2zM881 4h1v1h-1zM883 4h1v1h-1zM896 4h2v1h-2zM900 4h1v1h-1zM906 4h1v1h-1zM914 4h1v1h-1zM916 4h1v1h-1zM925 4h2v1h-2zM943 4h2v1h-2zM962 4h4v1h-4zM969 4h2v1h-2zM977 4h1v1h-1zM6 5h1v1h-1zM22 5h1v1h-1zM27 5h1v1h-1zM38 5h1v1h-1zM45 5h1v1h-1zM52 5h1v1h-1zM54 5h1v1h-1zM65 5h2v1h-2zM68 5h3v1h-3zM72 5h1v1h-1zM74 5h2v1h-2zM94 5h1v1h-1zM99 5h2v1h-2zM106 5h1v1h-1zM118 5h2v1h-2zM130 5h1v1h-1zM145 5h1v1h-1zM147 5h1v1h-1zM149 5h1v1h-1zM154 5h1v1h-1zM161 5h3v1h-3zM168 5h1v1h-1zM180 5h1v1h-1zM187 5h2v1h-2zM201 5h1v1h-1zM209 5h2v1h-2zM223 5h2v1h-2zM234 5h2v1h-2zM243 5h1v1h-1zM247 5h1v1h-1zM250 5h2v1h-2zM259 5h4v1h-4zM270 5h1v1h-1zM291 5h1v1h-1zM294 5h1v1h-1zM299 5h2v1h-2zM306 5h1v1h-1zM312 5h1v1h-1zM329 5h1v1h-1zM334 5h1v1h-1zM338 5h1v1h-1zM353 5h1v1h-1zM355 5h1v1h-1zM365 5h1v1h-1zM383 5h1v1h-1zM387 5h1v1h-1zM409 5h1v1h-1zM415 5h1v1h-1zM418 5h1v1h-1zM446 5h3v1h-3zM478 5h1v1h-1zM493 5h1v1h-1zM498 5h1v1h-1zM501 5h1v1h-1zM553 5h2v1h-2zM566 5h1v1h-1zM572 5h2v1h-2zM576 5h1v1h-1zM580 5h2v1h-2zM585 5h2v1h-2zM599 5h1v1h-1zM604 5h1v1h-1zM610 5h3v1h-3zM616 5h1v1h-1zM645 5h1v1h-1zM648 5h3v1h-3zM679 5h3v1h-3zM694 5h3v1h-3zM698 5h1v1h-1zM704 5h1v1h-1zM706 5h1v1h-1zM717 5h1v1h-1zM719 5h2v1h-2zM722 5h1v1h-1zM780 5h1v1h-1zM789 5h1v1h-1zM794 5h3v1h-3zM799 5h1v1h-1zM812 5h1v1h-1zM818 5h3v1h-3zM825 5h1v1h-1zM827 5h1v1h-1zM831 5h1v1h-1zM884 5h2v1h-2zM895 5h2v1h-2zM899 5h1v1h-1zM905 5h1v1h-1zM908 5h1v1h-1zM913 5h2v1h-2zM921 5h1v1h-1zM938 5h1v1h-1zM942 5h1v1h-1zM951 5h2v1h-2zM955 5h3v1h-3zM971 5h2v1h-2zM4 6h1v1h-1zM15 6h1v1h-1zM62 6h1v1h-1zM85 6h3v1h-3zM134 6h1v1h-1zM158 6h1v1h-1zM172 6h1v1h-1zM187 6h1v1h-1zM192 6h1v1h-1zM194 6h2v1h-2zM210 6h1v1h-1zM215 6h1v1h-1zM239 6h1v1h-1zM283 6h1v1h-1zM293 6h2v1h-2zM312 6h1v1h-1zM316 6h1v1h-1zM337 6h1v1h-1zM356 6h3v1h-3zM381 6h2v1h-2zM400 6h1v1h-1zM448 6h2v1h-2zM454 6h1v1h-1zM460 6h2v1h-2zM478 6h1v1h-1zM542 6h3v1h-3zM597 6h1v1h-1zM625 6h1v1h-1zM707 6h1v1h-1zM724 6h1v1h-1zM735 6h1v1h-1zM740 6h1v1h-1zM794 6h1v1h-1zM832 6h1v1h-1zM848 6h1v1h-1zM855 6h1v1h-1zM863 6h2v1h-2zM944 6h1v1h-1z"/></svg>
<svg style="left:0px;top:1px" width="1452" height="1" viewBox="0 0 1452 1" shape-rendering="crispEdges"><path fill="#fff" d="M5 0h2v1h-2zM21 0h1v1h-1zM25 0h1v1h-1zM65 0h1v1h-1zM75 0h1v1h-1zM77 0h1v1h-1zM85 0h1v1h-1zM87 0h2v1h-2zM92 0h1v1h-1zM113 0h1v1h-1zM116 0h1v1h-1zM119 0h1v1h-1zM126 0h2v1h-2zM141 0h1v1h-1zM184 0h1v1h-1zM199 0h1v1h-1zM203 0h1v1h-1zM210 0h1v1h-1zM233 0h1v1h-1zM236 0h3v1h-3zM243 0h5v1h-5zM264 0h2v1h-2zM282 0h1v1h-1zM302 0h2v1h-2zM305 0h3v1h-3zM310 0h1v1h-1zM319 0h1v1h-1zM326 0h1v1h-1zM375 0h1v1h-1zM422 0h1v1h-1zM474 0h1v1h-1zM483 0h1v1h-1zM515 0h1v1h-1zM530 0h1v1h-1zM538 0h1v1h-1zM548 0h1v1h-1zM551 0h1v1h-1zM571 0h4v1h-4zM592 0h2v1h-2zM602 0h3v1h-3zM606 0h2v1h-2zM611 0h1v1h-1zM614 0h1v1h-1zM623 0h1v1h-1zM639 0h6v1h-6zM653 0h1v1h-1zM685 0h1v1h-1zM700 0h1v1h-1zM709 0h2v1h-2zM713 0h2v1h-2zM725 0h1v1h-1zM728 0h1v1h-1zM751 0h1v1h-1zM754 0h1v1h-1zM792 0h1v1h-1zM803 0h2v1h-2zM825 0h2v1h-2zM830 0h2v1h-2zM837 0h3v1h-3zM842 0h1v1h-1zM850 0h1v1h-1zM865 0h1v1h-1zM895 0h1v1h-1zM924 0h4v1h-4zM933 0h2v1h-2zM936 0h2v1h-2zM941 0h2v1h-2zM951 0h1v1h-1zM957 0h1v1h-1zM970 0h2v1h-2zM981 0h1v1h-1zM1001 0h1v1h-1zM1006 0h1v1h-1zM1046 0h1v1h-1zM1050 0h1v1h-1zM1077 0h1v1h-1zM1097 0h1v1h-1zM1099 0h1v1h-1zM1116 0h2v1h-2zM1130 0h1v1h-1zM1155 0h1v1h-1zM1168 0h1v1h-1zM1173 0h1v1h-1zM1197 0h1v1h-1zM1238 0h1v1h-1zM1258 0h1v1h-1zM1269 0h2v1h-2zM1311 0h2v1h-2zM1321 0h1v1h-1zM1340 0h2v1h-2zM1349 0h2v1h-2zM1353 0h1v1h-1zM1376 0h2v1h-2zM1389 0h1v1h-1zM1408 0h1v1h-1zM1410 0h1v1h-1zM1414 0h1v1h-1zM1424 0h1v1h-1zM1437 0h2v1h-2zM1447 0h1v1h-1z"/></svg>
<svg style="left:0px;top:2px" width="6" height="72" viewBox="0 0 6 72" shape-rendering="crispEdges"><path fill="#fff" d="M1 0h1v1h-1zM4 0h1v1h-1zM1 2h2v1h-2zM1 4h1v1h-1zM1 5h1v1h-1zM5 7h1v1h-1zM0 8h1v1h-1zM5 10h1v1h-1zM0 11h2v1h-2zM2 12h1v1h-1zM2 13h2v1h-2zM5 15h1v1h-1zM0 16h2v1h-2zM5 16h1v1h-1zM3 17h3v1h-3zM2 18h1v1h-1zM2 20h1v1h-1zM2 21h4v1h-4zM3 22h1v1h-1zM1 24h2v1h-2zM5 26h1v1h-1zM3 27h1v1h-1zM2 28h2v1h-2zM3 29h1v1h-1zM5 29h1v1h-1zM1 30h1v1h-1zM2 32h2v1h-2zM0 34h1v1h-1zM3 34h1v1h-1zM5 35h1v1h-1zM0 36h1v1h-1zM1 37h1v1h-1zM5 39h1v1h-1zM5 40h1v1h-1zM4 44h2v1h-2zM1 46h1v1h-1zM2 47h2v1h-2zM4 49h1v1h-1zM3 53h2v1h-2zM0 55h1v1h-1zM0 56h3v1h-3zM0 59h2v1h-2zM4 59h1v1h-1zM4 62h2v1h-2zM2 64h1v1h-1zM4 64h1v1h-1zM0 68h1v1h-1zM1 69h1v1h-1z"/></svg>
<svg style="left:1446px;top:2px" width="6" height="71" viewBox="0 0 6 71" shape-rendering="crispEdges"><path fill="#fff" d="M0 1h1v1h-1zM4 2h2v1h-2zM2 4h1v1h-1zM3 7h1v1h-1zM0 8h1v1h-1zM3 9h1v1h-1zM5 9h1v1h-1zM2 10h1v1h-1zM0 11h3v1h-3zM4 13h1v1h-1zM0 14h1v1h-1zM4 15h2v1h-2zM3 16h1v1h-1zM0 18h1v1h-1zM2 18h1v1h-1zM2 23h2v1h-2zM4 26h1v1h-1zM4 32h2v1h-2zM5 33h1v1h-1zM2 34h2v1h-2zM1 35h1v1h-1zM2 36h1v1h-1zM3 37h1v1h-1zM5 37h1v1h-1zM5 40h1v1h-1zM0 46h1v1h-1zM2 50h2v1h-2zM2 51h1v1h-1zM4 53h1v1h-1zM1 56h2v1h-2zM0 57h1v1h-1zM5 57h1v1h-1zM1 60h2v1h-2zM4 60h2v1h-2zM4 62h1v1h-1zM0 66h1v1h-1zM2 66h2v1h-2zM4 67h1v1h-1zM0 68h2v1h-2z"/></svg>
</div></body></html>
